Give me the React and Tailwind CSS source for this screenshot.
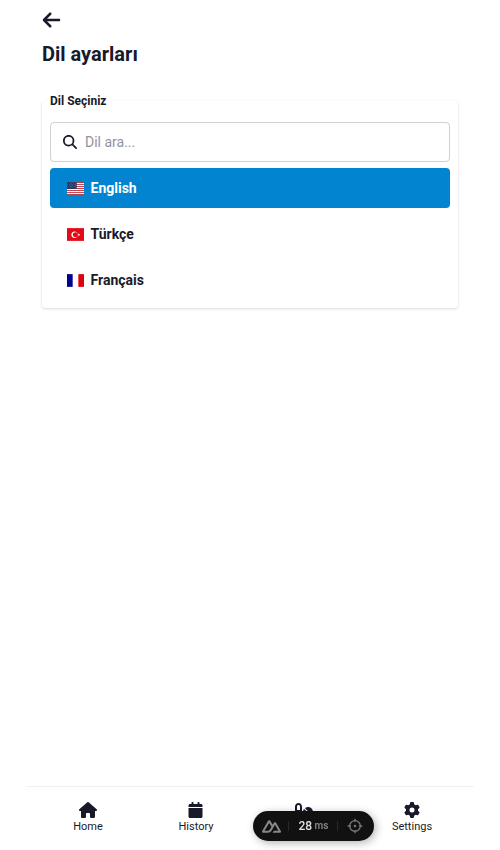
import { FaArrowLeft, FaMagnifyingGlass, FaHouse, FaCalendar, FaPills, FaGear } from "react-icons/fa6";

function UsFlag() {
  return (
    <svg viewBox="0 0 640 480" className="h-[13px] w-[17px]">
      <rect width="640" height="480" fill="#bd3d44" />
      {[1, 3, 5, 7, 9, 11].map((n) => (
        <rect key={n} y={n * 36.92} width="640" height="36.92" fill="#fff" />
      ))}
      <rect width="365" height="258.5" fill="#192f5d" />
      {[0, 1, 2, 3, 4, 5, 6, 7, 8].map((r) =>
        Array.from({ length: r % 2 ? 5 : 6 }, (_, c) => (
          <circle key={r + "-" + c} cx={30 + c * 61 + (r % 2 ? 30 : 0)} cy={26 + r * 26} r="8" fill="#fff" />
        ))
      )}
    </svg>
  );
}

function TrFlag() {
  return (
    <svg viewBox="0 0 640 480" className="h-[13px] w-[17px]">
      <rect width="640" height="480" fill="#e30a17" />
      <path fill="#fff" d="M407 247.500c0 66.200-54.600 119.900-122 119.900s-122-53.700-122-120 54.600-119.800 122-119.800 122 53.700 122 119.900" />
      <path fill="#e30a17" d="M413 247.500c0 53-43.600 95.900-97.500 95.900s-97.600-43-97.600-96 43.700-95.800 97.600-95.800 97.600 42.900 97.600 95.900z" />
      <path fill="#fff" d="m430.700 191.500-1 44.300-41.300 11.200 40.800 14.500-1 40.700 26.500-31.800 40.200 14-23.200-34.100 28.300-33.900-43.500 12-25.800-37z" />
    </svg>
  );
}

function FrFlag() {
  return (
    <svg viewBox="0 0 640 480" className="h-[13px] w-[17px]">
      <rect width="640" height="480" fill="#fff" />
      <rect width="213.300" height="480" fill="#000091" />
      <rect x="426.700" width="213.300" height="480" fill="#e1000f" />
    </svg>
  );
}

const languages = [
  { name: "English", Flag: UsFlag, active: true },
  { name: "Türkçe", Flag: TrFlag },
  { name: "Français", Flag: FrFlag },
];

const tabs = [
  { label: "Home", Icon: FaHouse, iconClass: "mr-px h-4 w-[18px]" },
  { label: "History", Icon: FaCalendar, iconClass: "mr-px h-4 w-[15px]" },
  { label: "", Icon: FaPills, iconClass: "mr-px h-4 w-[18px]" },
  { label: "Settings", Icon: FaGear, iconClass: "h-4 w-4" },
];

function DevtoolsPill() {
  return (
    <div className="fixed bottom-[9px] left-[252.500px] flex h-[30px] w-[121px] items-center rounded-full bg-[#111] pl-[9.500px] font-['Roboto',sans-serif] font-medium text-white shadow-[2px_2px_8px_rgba(0,0,0,0.3)]">
      <svg viewBox="0 0 324 324" className="size-[19px] text-[#888]" fill="currentColor">
        <path d="M181.767 270H302.211C306.037 270 309.795 269.003 313.108 267.107C316.421 265.211 319.172 262.484 321.084 259.2C322.996 255.915 324.002 252.19 324 248.399C323.998 244.607 322.989 240.883 321.074 237.601L240.187 98.744C238.275 95.461 235.525 92.734 232.213 90.839C228.901 88.943 225.143 87.945 221.318 87.945C217.494 87.945 213.736 88.943 210.424 90.839C207.112 92.734 204.361 95.461 202.449 98.744L181.767 134.272L141.329 64.798C139.416 61.515 136.664 58.788 133.351 56.893C130.038 54.998 126.28 54 122.454 54C118.629 54 114.871 54.998 111.558 56.893C108.245 58.788 105.493 61.515 103.58 64.798L2.926 237.601C1.011 240.883 0 244.607 0 248.399C0 252.19 1.004 255.915 2.916 259.2C4.828 262.484 7.579 265.211 10.892 267.107C14.205 269.003 17.963 270 21.789 270H97.394C127.349 270 149.44 256.959 164.641 231.517L201.546 168.172L221.313 134.272L280.637 236.1H201.546L181.767 270ZM96.161 236.065L43.398 236.054L122.49 100.291L161.953 168.172L135.531 213.543C125.436 230.051 113.968 236.065 96.161 236.065Z" />
      </svg>
      <span className="ml-[7px] h-[10px] w-px bg-[#282828]" />
      <span className="ml-[9.500px] w-[14px] text-xs leading-none text-[#e0e0e0]">28</span>
      <span className="ml-[2px] w-[14px] text-[10px] font-semibold leading-none text-[#858585]">ms</span>
      <span className="ml-2 h-[10px] w-px bg-[#282828]" />
      <svg viewBox="0 0 24 24" className="ml-[9.500px] size-[16px] text-[#777]" fill="none" stroke="currentColor" strokeWidth="2">
        <circle cx="12" cy="12" r="8" />
        <path d="M12 1v5M12 18v5M1 12h5M18 12h5" />
        <circle cx="12" cy="12" r="2" fill="currentColor" stroke="none" />
      </svg>
    </div>
  );
}

export default function App() {
  return (
    <div className="flex h-screen flex-col bg-white px-[26px] font-['Roboto',sans-serif] text-[#181a2a]">
      <main className="flex-1 px-4 pt-[10px]">
        <FaArrowLeft className="h-5 w-[19px]" />
        <h1 className="mt-[10px] text-xl font-bold leading-7">Dil ayarları</h1>
        <fieldset className="mt-[25px] rounded px-2 pb-2 shadow-[0_1px_3px_rgba(0,0,0,0.15)]">
          <legend className="text-xs font-bold leading-4">Dil Seçiniz</legend>
          <div className="mt-[13px] flex h-10 items-center gap-2 rounded border border-[#d0d0d3] px-3">
            <FaMagnifyingGlass className="size-[14px]" />
            <input className="min-w-0 flex-1 text-sm outline-none placeholder:text-[#9292a0]" placeholder="Dil ara..." />
          </div>
          <div className="mt-[6px] flex flex-col gap-[6px]">
            {languages.map(({ name, Flag, active }) => (
              <button
                key={name}
                className={
                  active
                    ? "flex h-10 items-center gap-[6.500px] rounded bg-[#0284d1] px-[17px] text-sm font-bold text-white"
                    : "flex h-10 items-center gap-[6.500px] rounded px-[17px] text-sm font-bold"
                }
              >
                <Flag />
                {name}
              </button>
            ))}
          </div>
        </fieldset>
      </main>
      <nav className="grid h-16 grid-cols-4 border-t border-[#f1f1f2] px-2">
        {tabs.map(({ label, Icon, iconClass }, i) => (
          <div key={i} className="flex flex-col items-center pt-[15px] text-[11px] leading-[18px]">
            <Icon className={iconClass} />
            {label}
          </div>
        ))}
      </nav>
      <DevtoolsPill />
    </div>
  );
}
